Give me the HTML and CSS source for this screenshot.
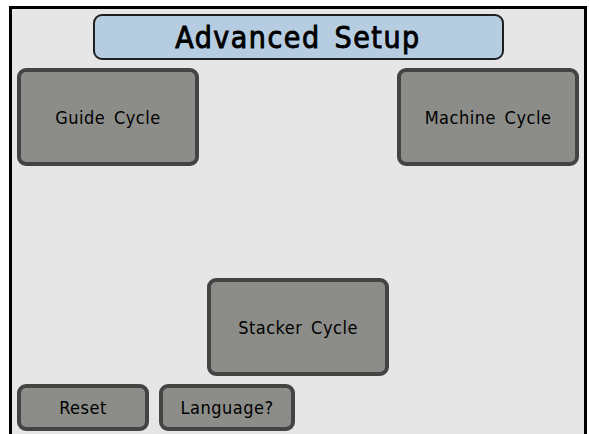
FILE: index.html
```html
<!DOCTYPE html>
<html lang="en">
<head>
    <meta charset="UTF-8">
    <meta name="viewport" content="width=device-width, initial-scale=1.0">
    <title>Advanced Setup</title>
    <link rel="stylesheet" href="styles.css">
</head>
<body>
    <div class="screen">
        <div class="title">Advanced Setup</div>

        <div class="row top-row">
            <button class="cycle-btn">Guide Cycle</button>
            <button class="cycle-btn">Machine Cycle</button>
        </div>

        <div class="row middle-row">
            <button class="cycle-btn">Stacker Cycle</button>
        </div>

        <div class="row bottom-row">
            <button class="small-btn reset-btn">Reset</button>
            <button class="small-btn language-btn">Language?</button>
        </div>
    </div>
</body>
</html>
```

FILE: styles.css
```css
* {
    box-sizing: border-box;
}

body {
    margin: 0;
    padding: 0;
    background-color: #ffffff;
    font-family: "DejaVu Sans Condensed", "DejaVu Sans", sans-serif;
    overflow: hidden;
}

.screen {
    margin: 6px 2px 0 9px;
    width: 578px;
    height: 440px;
    border: 3px solid #000000;
    border-bottom: none;
    background-color: #e6e6e6;
    padding: 5px 5px 0 5px;
    display: flex;
    flex-direction: column;
}

.title {
    width: 411px;
    height: 46px;
    margin: 0 auto;
    background-color: #b5cce1;
    border: 2px solid #1e1e1e;
    border-radius: 9px;
    display: flex;
    justify-content: center;
    align-items: center;
    font-size: 30px;
    letter-spacing: 1.5px;
    word-spacing: 4px;
    color: #000000;
    -webkit-text-stroke: 0.9px #000000;
}

.row {
    display: flex;
}

.top-row {
    justify-content: space-between;
    margin-top: 8px;
}

.middle-row {
    justify-content: center;
    margin-top: 112px;
}

.bottom-row {
    gap: 10px;
    margin-top: 8px;
}

button {
    font-family: "DejaVu Sans Condensed", "DejaVu Sans", sans-serif;
    color: #000000;
    background-color: #8c8d89;
    border: 4px solid #444444;
    border-radius: 9px;
    padding: 0;
    letter-spacing: 0.5px;
    word-spacing: 3px;
    cursor: pointer;
}

.cycle-btn {
    width: 182px;
    height: 98px;
    font-size: 18px;
}

.small-btn {
    height: 47px;
    font-size: 18px;
}

.reset-btn {
    width: 132px;
}

.language-btn {
    width: 136px;
}
```
